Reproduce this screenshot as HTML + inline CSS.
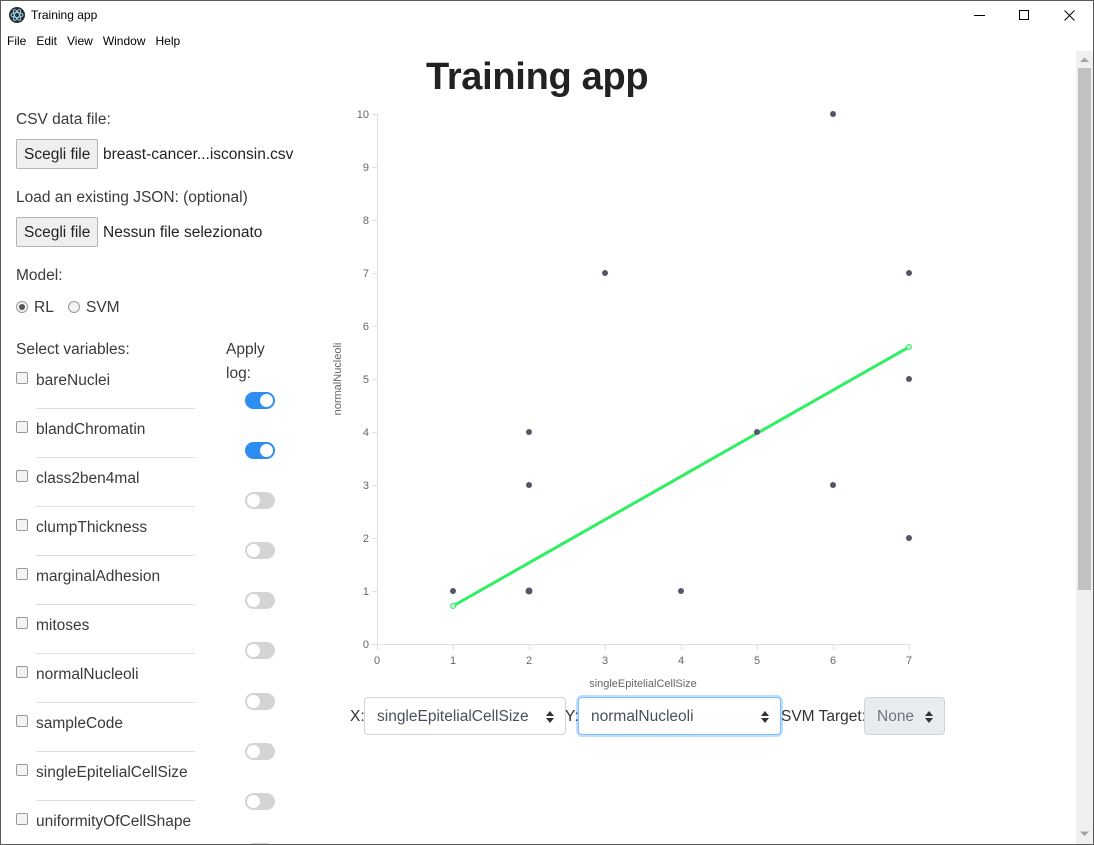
<!DOCTYPE html>
<html style="width:1094px;height:845px;overflow:hidden"><head><meta charset="utf-8"><style>
*{margin:0;padding:0;box-sizing:border-box}
body{width:1094px;height:845px;overflow:hidden;background:#fff;font-family:"Liberation Sans",sans-serif;color:#333;position:relative}
.clip{position:absolute;left:0;top:0;width:1094px;height:845px;overflow:hidden}
.a{position:absolute;white-space:nowrap}
.frame{position:absolute;left:0;top:0;width:1094px;height:845px;border:1px solid #5a5a5a;pointer-events:none}
.t{font-size:15.5px;color:#3a3a3a}
.btn{position:absolute;height:30px;border:1px solid #b5b5b5;border-radius:2px;background:#efefef;font-size:15.5px;line-height:30px;padding:0 7px;color:#222}
.cb{position:absolute;width:12px;height:12px;border:1px solid #9a9a9a;border-radius:2px;background:#f3f3f3}
.sep{position:absolute;left:36px;width:159px;height:1px;background:#e0e0e0}
.tg{position:absolute;left:245px;width:30px;height:17px;border-radius:9px;background:#d4d4d4}
.tg::after{content:"";position:absolute;top:2px;left:2px;width:13px;height:13px;border-radius:50%;background:#fff}
.tg.on{background:#2d8df0}
.tg.on::after{left:15px}
.sel{position:absolute;top:697px;height:38px;border:1px solid #ced4da;border-radius:4px;background:#fff;font-size:15.5px;color:#495057;line-height:38px;padding-left:12px}
.sel svg{position:absolute;right:11px;top:13px}
</style></head><body><div class="clip">
<div class="a" style="left:9px;top:7px;width:16px;height:16px;border-radius:50%;background:#2b2f3a"></div>
<svg class="a" style="left:9px;top:7px" width="16" height="16" viewBox="0 0 16 16"><g fill="none" stroke="#9fd8e6" stroke-width="0.9"><ellipse cx="8" cy="8" rx="6" ry="2.4"/><ellipse cx="8" cy="8" rx="6" ry="2.4" transform="rotate(60 8 8)"/><ellipse cx="8" cy="8" rx="6" ry="2.4" transform="rotate(120 8 8)"/></g></svg>
<div class="a" style="left:31px;top:8px;font-size:12px;color:#000">Training app</div>
<div class="a" style="left:974px;top:15px;width:11px;height:1px;background:#000"></div>
<div class="a" style="left:1019px;top:10px;width:10px;height:10px;border:1px solid #000"></div>
<svg class="a" style="left:1064px;top:10px" width="11" height="11"><path d="M0.5 0.5L10.5 10.5M10.5 0.5L0.5 10.5" stroke="#000" stroke-width="1"/></svg>
<div class="a" style="left:7px;top:34px;font-size:12px;color:#000">File&nbsp;&nbsp; Edit&nbsp;&nbsp; View&nbsp;&nbsp; Window&nbsp;&nbsp; Help</div>
<div class="a" style="left:1076px;top:51px;width:17px;height:793px;background:#f0f0f0"></div>
<div class="a" style="left:1078px;top:68px;width:13px;height:522px;background:#c1c1c1"></div>
<svg class="a" style="left:1080px;top:57px" width="9" height="6"><path d="M0 5L4.5 0.5L9 5Z" fill="#a3a3a3"/></svg>
<svg class="a" style="left:1080px;top:831px" width="9" height="6"><path d="M0 0.5L4.5 5L9 0.5Z" fill="#a3a3a3"/></svg>
<div class="a" style="left:426px;top:56px;font-size:38px;font-weight:bold;color:#222;letter-spacing:-0.3px">Training app</div>
<div class="a t" style="left:16px;top:111px">CSV data file:</div>
<div class="btn" style="left:16px;top:139px">Scegli file</div>
<div class="a t" style="left:103px;top:146px;color:#222">breast-cancer...isconsin.csv</div>
<div class="a t" style="left:16px;top:189px">Load an existing JSON: (optional)</div>
<div class="btn" style="left:16px;top:217px">Scegli file</div>
<div class="a t" style="left:103px;top:224px;color:#222">Nessun file selezionato</div>
<div class="a t" style="left:16px;top:267px">Model:</div>
<div class="a" style="left:16px;top:301px;width:12px;height:12px;border:1px solid #999;border-radius:50%;background:#f3f3f3"><div style="margin:2px;width:6px;height:6px;border-radius:50%;background:#555"></div></div>
<div class="a t" style="left:34px;top:299px">RL</div>
<div class="a" style="left:68px;top:301px;width:12px;height:12px;border:1px solid #999;border-radius:50%;background:#f3f3f3"></div>
<div class="a t" style="left:86px;top:299px">SVM</div>
<div class="a t" style="left:16px;top:341px">Select variables:</div>
<div class="a t" style="left:226px;top:341px">Apply</div>
<div class="a t" style="left:226px;top:365px">log:</div>

<div class="cb" style="left:16px;top:372px"></div><div class="a t" style="left:36px;top:372px">bareNuclei</div><div class="sep" style="top:408px"></div>
<div class="cb" style="left:16px;top:421px"></div><div class="a t" style="left:36px;top:421px">blandChromatin</div><div class="sep" style="top:457px"></div>
<div class="cb" style="left:16px;top:470px"></div><div class="a t" style="left:36px;top:470px">class2ben4mal</div><div class="sep" style="top:506px"></div>
<div class="cb" style="left:16px;top:519px"></div><div class="a t" style="left:36px;top:519px">clumpThickness</div><div class="sep" style="top:555px"></div>
<div class="cb" style="left:16px;top:568px"></div><div class="a t" style="left:36px;top:568px">marginalAdhesion</div><div class="sep" style="top:604px"></div>
<div class="cb" style="left:16px;top:617px"></div><div class="a t" style="left:36px;top:617px">mitoses</div><div class="sep" style="top:653px"></div>
<div class="cb" style="left:16px;top:666px"></div><div class="a t" style="left:36px;top:666px">normalNucleoli</div><div class="sep" style="top:702px"></div>
<div class="cb" style="left:16px;top:715px"></div><div class="a t" style="left:36px;top:715px">sampleCode</div><div class="sep" style="top:751px"></div>
<div class="cb" style="left:16px;top:764px"></div><div class="a t" style="left:36px;top:764px">singleEpitelialCellSize</div><div class="sep" style="top:800px"></div>
<div class="cb" style="left:16px;top:813px"></div><div class="a t" style="left:36px;top:813px">uniformityOfCellShape</div>

<div class="tg on" style="top:392px"></div>
<div class="tg on" style="top:442px"></div>
<div class="tg" style="top:492px"></div>
<div class="tg" style="top:542px"></div>
<div class="tg" style="top:592px"></div>
<div class="tg" style="top:642px"></div>
<div class="tg" style="top:693px"></div>
<div class="tg" style="top:743px"></div>
<div class="tg" style="top:793px"></div>
<div class="tg" style="top:843px"></div>

<svg class="a" style="left:0;top:0" width="1094" height="700">
<g stroke="#e0e0e0" stroke-width="1" fill="none">
<path d="M377.5 114V644.5H909"/>
<path d="M372 114.5H377M372 167.5H377M372 220.5H377M372 273.5H377M372 326.5H377M372 379.5H377M372 432.5H377M372 485.5H377M372 538.5H377M372 591.5H377M372 644.5H377"/>
<path d="M377.5 644V650M453.5 644V650M529.5 644V650M605.5 644V650M681.5 644V650M757.5 644V650M833.5 644V650M909.5 644V650"/>
</g>
<g font-family="Liberation Sans,sans-serif" font-size="11" fill="#666" text-anchor="end">
<text x="369" y="118">10</text><text x="369" y="171">9</text><text x="369" y="224">8</text><text x="369" y="277">7</text><text x="369" y="330">6</text><text x="369" y="383">5</text><text x="369" y="436">4</text><text x="369" y="489">3</text><text x="369" y="542">2</text><text x="369" y="595">1</text><text x="369" y="648">0</text>
</g>
<g font-family="Liberation Sans,sans-serif" font-size="11" fill="#666" text-anchor="middle">
<text x="377" y="664">0</text><text x="453" y="664">1</text><text x="529" y="664">2</text><text x="605" y="664">3</text><text x="681" y="664">4</text><text x="757" y="664">5</text><text x="833" y="664">6</text><text x="909" y="664">7</text>
<text x="643" y="687">singleEpitelialCellSize</text>
<text transform="translate(341 379) rotate(-90)">normalNucleoli</text>
</g>
<line x1="453" y1="606" x2="909" y2="347" stroke="#2ef063" stroke-width="3"/>
<circle cx="453" cy="606" r="2.5" fill="#c8f5d4" stroke="#2ef063"/>
<circle cx="909" cy="347" r="2.5" fill="#c8f5d4" stroke="#2ef063"/>
<g fill="#55566a">
<circle cx="453" cy="591" r="3"/><circle cx="529" cy="591" r="3.5"/><circle cx="529" cy="485" r="3"/><circle cx="529" cy="432" r="3"/><circle cx="605" cy="273" r="3"/><circle cx="681" cy="591" r="3"/><circle cx="757" cy="432" r="3"/><circle cx="833" cy="114" r="3"/><circle cx="833" cy="485" r="3"/><circle cx="909" cy="273" r="3"/><circle cx="909" cy="379" r="3"/><circle cx="909" cy="538" r="3"/>
</g>
</svg>
<div class="a t" style="left:350px;top:708px;color:#333">X:</div>
<div class="sel" style="left:364px;width:202px">singleEpitelialCellSize<svg width="8" height="12"><path d="M4 0L8 5H0ZM4 12L0 7H8Z" fill="#333"/></svg></div>
<div class="a t" style="left:565px;top:708px;color:#333">Y:</div>
<div class="sel" style="left:578px;width:203px;border-color:#80bdff;box-shadow:0 0 0 2px rgba(0,123,255,.25)">normalNucleoli<svg width="8" height="12"><path d="M4 0L8 5H0ZM4 12L0 7H8Z" fill="#333"/></svg></div>
<div class="a t" style="left:781px;top:708px;color:#333">SVM Target:</div>
<div class="sel" style="left:864px;width:81px;background:#e9ecef;color:#6c757d">None<svg width="8" height="12"><path d="M4 0L8 5H0ZM4 12L0 7H8Z" fill="#333"/></svg></div>
<div class="frame"></div>
</div></body></html>
